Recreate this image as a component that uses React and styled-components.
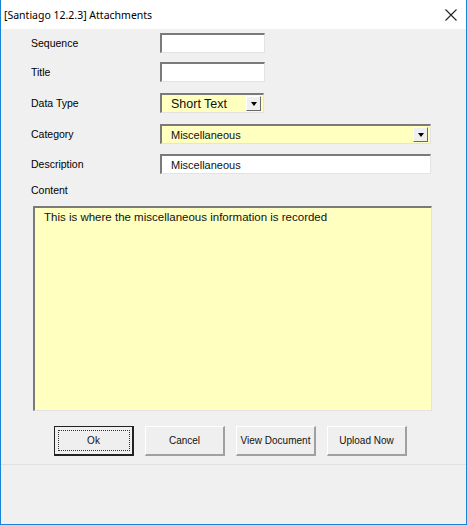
import React from 'react';
import styled, { createGlobalStyle } from 'styled-components';

const Global = createGlobalStyle`
  html, body { margin: 0; padding: 0; background: #f0f0f0; }
  * { box-sizing: border-box; }
`

const Window = styled.div`
  width: 467px;
  height: 525px;
  display: flex;
  flex-direction: column;
  background: #f0f0f0;
  border: 1px solid #1883d7;
  border-top: none;
  font-family: "Liberation Sans", Arial, sans-serif;
  font-size: 10.5px;
  color: #000;
`

const TitleBar = styled.div`
  height: 29px;
  background: #fff;
  display: flex;
  align-items: center;
  justify-content: space-between;
  padding: 0 0 0 3px;
  font-family: "Noto Sans", "Open Sans", sans-serif;
  font-size: 10.5px;
  color: #000;
`

const CloseBtn = styled.div`
  width: 30px;
  height: 29px;
  display: flex;
  align-items: center;
  justify-content: center;
`

const Form = styled.div`
  padding: 4px 0 0 30px;
  display: flex;
  flex-direction: column;
`

const Row = styled.div`
  display: grid;
  grid-template-columns: 129px 1fr;
  align-items: center;
  height: 20px;
  margin-top: ${p => p.gap ?? 10}px;
`

const Label = styled.div`
  line-height: 20px;
`

const Field = styled.div`
  width: ${p => p.w}px;
  height: ${p => p.h || 20}px;
  background: ${p => p.yellow ? '#ffffc0' : '#fff'};
  border-top: 2px solid #7a7a7a;
  border-left: 2px solid #7a7a7a;
  border-bottom: 1px solid #e3e3e3;
  border-right: 1px solid #e3e3e3;
  display: flex;
  align-items: ${p => p.multi ? 'flex-start' : 'center'};
  padding: ${p => p.multi ? '3px 9px' : '0 9px'};
  font-size: ${p => p.fs || 11}px;
  color: #111;
`

const FieldText = styled.span`
  flex: 1;
  white-space: nowrap;
`

const DropBtn = styled.div`
  width: 15px;
  height: 15px;
  margin-right: -7px;
  background: #f0f0f0;
  border-top: 1px solid #fff;
  border-left: 1px solid #fff;
  border-right: 1px solid #6a6a6a;
  border-bottom: 1px solid #6a6a6a;
  display: flex;
  align-items: center;
  justify-content: center;
`

const Arrow = styled.div`
  width: 0;
  height: 0;
  border-left: 3px solid transparent;
  border-right: 3px solid transparent;
  border-top: 4px solid #000;
`

const ContentLabel = styled.div`
  margin-top: 6px;
  line-height: 20px;
`

const ContentBox = styled(Field)`
  margin-top: 6px;
  margin-left: 2px;
`

const ButtonRow = styled.div`
  display: flex;
  gap: 11px;
  padding-left: 53px;
  margin-top: 15px;
`

const Button = styled.div`
  width: 80px;
  height: 30px;
  display: flex;
  align-items: center;
  justify-content: center;
  background: #efefef;
  border-top: 1px solid #fff;
  border-left: 1px solid #fff;
  border-right: 2px solid #a0a0a0;
  border-bottom: 2px solid #a0a0a0;
  font-size: 10px;
  color: #111;
  ${p => p.primary && `
    border: 1px solid #222;
    border-right: 2px solid #222;
    border-bottom: 2px solid #222;
  `}
`

const Focus = styled.div`
  width: 72px;
  height: 21px;
  border: 1px dotted #333;
  display: flex;
  align-items: center;
  justify-content: center;
`

const Footer = styled.div`
  flex: 1;
  margin-top: 8px;
  border-top: 1px solid #e0e0e0;
`

const Select = ({ w, value, fs }) => (
  <Field w={w} fs={fs} yellow>
    <FieldText>{value}</FieldText>
    <DropBtn><Arrow /></DropBtn>
  </Field>
)

export default function App() {
  return (
    <>
      <Global />
      <Window>
        <TitleBar>
          <span>[Santiago 12.2.3] Attachments</span>
          <CloseBtn>
            <svg width="12" height="12" viewBox="0 0 12 12">
              <path d="M0.5 0.5 L11.5 11.5 M11.5 0.5 L0.5 11.5" stroke="#222" strokeWidth="1.1" fill="none" />
            </svg>
          </CloseBtn>
        </TitleBar>
        <Form>
          <Row gap={0}>
            <Label>Sequence</Label>
            <Field w={105} />
          </Row>
          <Row gap={9}>
            <Label>Title</Label>
            <Field w={105} />
          </Row>
          <Row gap={11}>
            <Label>Data Type</Label>
            <Select w={104} fs={12.5} value="Short Text" />
          </Row>
          <Row gap={11}>
            <Label>Category</Label>
            <Select w={271} value="Miscellaneous" />
          </Row>
          <Row gap={10}>
            <Label>Description</Label>
            <Field w={271}><FieldText>Miscellaneous</FieldText></Field>
          </Row>
          <ContentLabel>Content</ContentLabel>
          <ContentBox w={399} h={205} fs={11.5} yellow multi>
            This is where the miscellaneous information is recorded
          </ContentBox>
        </Form>
        <ButtonRow>
          <Button primary><Focus>Ok</Focus></Button>
          <Button>Cancel</Button>
          <Button>View Document</Button>
          <Button>Upload Now</Button>
        </ButtonRow>
        <Footer />
      </Window>
    </>
  )
}
